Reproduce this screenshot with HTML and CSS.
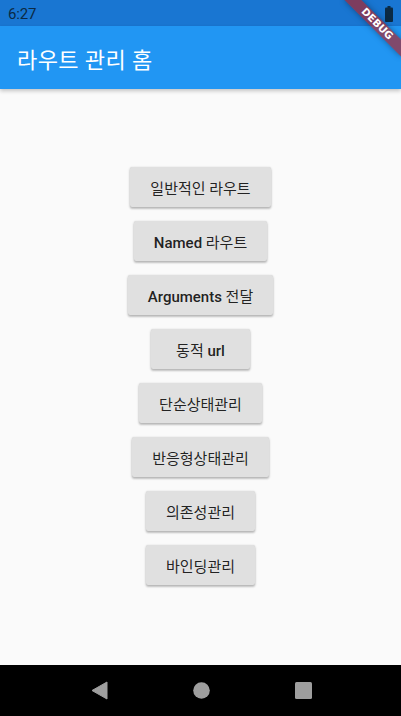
FILE: index.html
```html
<!DOCTYPE html>
<html lang="ko">
<head>
<meta charset="utf-8">
<title>라우트 관리 홈</title>
<link rel="stylesheet" href="styles.css">
</head>
<body>
<div class="phone">
  <div class="status-bar">
    <span class="time">6:27</span>
    <svg class="battery" width="8" height="16" viewBox="0 0 8 16"><rect x="2.5" y="0" width="3" height="2" fill="#0b2a44"/><rect x="0" y="1.5" width="8" height="14.5" rx="1" fill="#0b2a44"/></svg>
  </div>
  <header class="app-bar">
    <h1 class="title">라우트 관리 홈</h1>
  </header>
  <main class="content">
    <button class="btn">일반적인 라우트</button>
    <button class="btn"><span class="latin">Named</span> 라우트</button>
    <button class="btn"><span class="latin">Arguments</span> 전달</button>
    <button class="btn btn-wide">동적 <span class="latin">url</span></button>
    <button class="btn">단순상태관리</button>
    <button class="btn">반응형상태관리</button>
    <button class="btn">의존성관리</button>
    <button class="btn">바인딩관리</button>
  </main>
  <nav class="nav-bar">
    <svg width="17" height="19" viewBox="0 0 17 19"><path d="M16 1 L1 9.5 L16 18 Z" fill="#9e9e9e" stroke="#9e9e9e" stroke-linejoin="round" stroke-width="1"/></svg>
    <svg width="17" height="17" viewBox="0 0 17 17"><circle cx="8.5" cy="8.5" r="8.3" fill="#9e9e9e"/></svg>
    <svg width="17" height="17" viewBox="0 0 17 17"><rect x="0" y="0" width="17" height="17" rx="1.5" fill="#9e9e9e"/></svg>
  </nav>
  <div class="debug-banner">DEBUG</div>
</div>
</body>
</html>
```
FILE: styles.css
```css
* { box-sizing: border-box; }
html, body { margin: 0; padding: 0; }
body {
  font-family: "Roboto", "Noto Sans CJK KR", sans-serif;
  background: #fafafa;
}
.phone {
  position: relative;
  width: 401px;
  height: 716px;
  display: flex;
  flex-direction: column;
  overflow: hidden;
  background: #fafafa;
}
.status-bar {
  height: 26px;
  flex: none;
  background: #1976d2;
  display: flex;
  align-items: center;
  justify-content: space-between;
  padding: 0 8px 0 8px;
}
.time {
  font-size: 15px;
  color: #0b2a44;
  letter-spacing: -0.2px;
  margin-top: 1px;
}
.battery { margin-top: 1px; }
.app-bar {
  height: 63px;
  flex: none;
  background: #2196f3;
  display: flex;
  align-items: center;
  padding: 0 16px 0 17px;
  box-shadow: 0 2px 4px rgba(0,0,0,0.22);
  position: relative;
  z-index: 1;
}
.title {
  margin: 0;
  font-size: 22px;
  font-weight: 400;
  color: #fff;
  letter-spacing: 0.4px;
  margin-top: 1px;
}
.content {
  flex: 1;
  display: flex;
  flex-direction: column;
  align-items: center;
  justify-content: center;
  gap: 14px;
  padding-bottom: 2px;
}
.btn {
  height: 40px;
  padding: 0 20px;
  border: none;
  border-radius: 2px;
  background: #e0e0e0;
  color: rgba(0,0,0,0.87);
  font-family: "Roboto", "Noto Sans CJK KR", sans-serif;
  font-size: 15px;
  font-weight: 400;
  box-shadow: 0 1px 3px rgba(0,0,0,0.2), 0 2px 2px rgba(0,0,0,0.14), 0 0 1px rgba(0,0,0,0.1);
}
.btn-wide { padding: 0 25px; }
.latin { font-weight: 500; }
.nav-bar {
  height: 51px;
  flex: none;
  background: #000;
  display: flex;
  align-items: center;
  justify-content: center;
  gap: 85px;
  padding-left: 2px;
}
.debug-banner {
  position: absolute;
  left: 337px;
  top: 18px;
  width: 80px;
  height: 12px;
  transform: rotate(45deg);
  background: rgba(183,28,28,0.63);
  color: #fff;
  font-family: "DejaVu Sans", sans-serif;
  font-size: 10.2px;
  font-weight: 700;
  line-height: 12px;
  text-align: center;
  box-shadow: 0 0 6px rgba(0,0,0,0.35);
  z-index: 2;
}
```
